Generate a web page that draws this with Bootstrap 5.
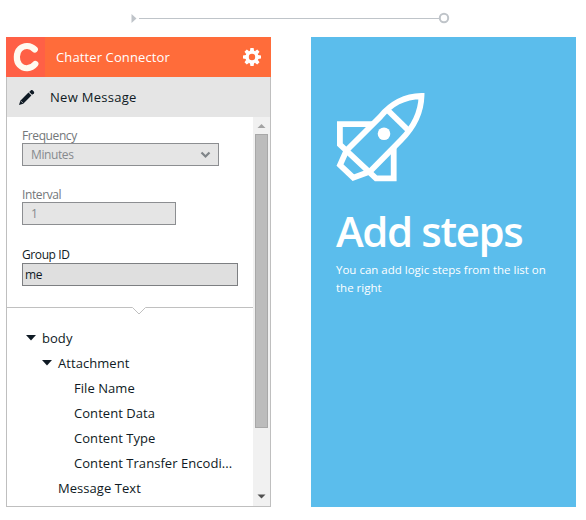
<!DOCTYPE html>
<html lang="en">
<head>
<meta charset="utf-8">
<meta name="viewport" content="width=device-width, initial-scale=1">
<title>Logic steps</title>
<link href="https://cdn.jsdelivr.net/npm/bootstrap@5.3.0/dist/css/bootstrap.min.css" rel="stylesheet">
<style>
  body { font-family: "Open Sans", "Noto Sans", sans-serif; font-size: 13px; line-height: 20px; color: #0f1a24; background: #fff; }
  svg { display: block; flex: none; }
  .designer { width: 586px; height: 520px; padding: 0 10px 13px 6px; }
  .track { height: 37px; padding-left: 125px; }
  .boards { gap: 40px; }
  .connector { width: 265px; height: 470px; border: 1px solid #bfbfbf; border-top: 0; }
  .connector-head { height: 40px; margin: 0 -1px; background: #ff6c3a; color: #fff; font-weight: 500; }
  .connector-head span { margin-left: 11px; letter-spacing: .12px; }
  .connector-head .gear { margin-right: 9px; }
  .brand-tile { width: 39px; height: 40px; background: #ff6046; }
  .operation { height: 40px; background: #e5e5e5; padding-left: 11px; }
  .operation span { margin-left: 15px; letter-spacing: .28px; }
  .fields { height: 190px; padding: 9px 0 0 15px; font-size: 12px; line-height: 17px; letter-spacing: -.4px; }
  .field-label { height: 17px; line-height: 20px; }
  .label-interval { margin-top: 19px; }
  .label-group { margin-top: 20px; margin-bottom: 1px; }
  .field-box { height: 23px; border: 1px solid #8c8e91; background: #e5e5e5; color: #868a8e; }
  .inactive { color: #73777a; }
  .entry { background: #dfdfdf; border-color: #7d7f82; color: #0f1a24; }
  .w-frequency { width: 197px; padding: 0 7px 0 8px; }
  .w-interval { width: 154px; padding-left: 8px; }
  .w-group { width: 216px; padding-left: 2px; }
  .tree { padding: 9px 0 0 19px; letter-spacing: .05px; }
  .tree-row { height: 25px; gap: 6px; }
  .level-1 { padding-left: 16px; }
  .level-1-leaf { padding-left: 32px; }
  .level-2 { padding-left: 48px; }
  .scroll-rail { width: 17px; background: #f1f1f1; }
  .scroll-thumb { width: 13px; height: 294px; margin-left: 2px; background: #bcbcbc; border: 1px solid #a8a8a8; }
  .steps { width: 265px; height: 470px; background: #5bbdec; color: #fff; padding: 55px 0 0 25px; }
  .steps h1 { font-size: 42px; line-height: 50px; font-weight: 600; letter-spacing: -1.4px; margin: 24px 0 0; }
  .steps p { font-size: 11.5px; line-height: 18px; font-weight: 500; margin: 5px 0 0; }
</style>
<script src="https://cdn.jsdelivr.net/npm/bootstrap@5.3.0/dist/js/bootstrap.bundle.min.js"></script>
</head>
<body>
<main class="designer overflow-hidden">
  <div class="track">
    <svg width="320" height="37" viewBox="0 0 320 37" fill="none" aria-hidden="true">
      <path d="M.5 14v9l5-4.500z" fill="#bfc4c9"/>
      <path d="M8 18.500h301" stroke="#bfc4c9"/>
      <circle cx="313" cy="18" r="4.200" stroke="#bfc4c9" stroke-width="2"/>
    </svg>
  </div>
  <div class="boards d-flex">
    <section class="connector d-flex flex-column">
      <header class="connector-head d-flex align-items-center flex-shrink-0">
        <div class="brand-tile d-flex">
          <svg width="39" height="40" viewBox="0 0 39 40" fill="none"><path d="M28.800 12.500C24.500 8 18 8 14 11.700C10 15.500 9.800 24 13.500 28C18 32.700 25 32.200 29.300 27" stroke="#fffaf0" stroke-width="6.200" stroke-linecap="round"/></svg>
        </div>
        <span>Chatter Connector</span>
        <svg class="gear ms-auto" width="20" height="20" viewBox="-10 -10 20 20">
          <g fill="#fff"><path fill-rule="evenodd" d="M0-6.600A6.600 6.600 0 1 1 0 6.600A6.600 6.600 0 1 1 0-6.600M0-3.200A3.200 3.200 0 1 0 0 3.200A3.200 3.200 0 1 0 0-3.200"/>
          <path id="tooth" d="M-2.100-6L-1.600-9h3.200L2.100-6z"/><use href="#tooth" transform="rotate(45)"/><use href="#tooth" transform="rotate(90)"/><use href="#tooth" transform="rotate(135)"/><use href="#tooth" transform="rotate(180)"/><use href="#tooth" transform="rotate(225)"/><use href="#tooth" transform="rotate(270)"/><use href="#tooth" transform="rotate(315)"/></g>
        </svg>
      </header>
      <div class="operation d-flex align-items-center flex-shrink-0">
        <svg width="17" height="17" viewBox="0 0 17 17" fill="#0f1a24"><path d="M1 16L2.300 11.800L10.500 3.600L13.400 6.500L5.200 14.700z"/><path d="M11.200 2.900L13 1.200C14 .300 17 3 16 4.300L14.100 5.800z"/><path d="M3.200 12.300L4.700 13.800" stroke="#e5e5e5" stroke-width=".8"/></svg>
        <span>New Message</span>
      </div>
      <div class="d-flex flex-grow-1 overflow-hidden">
        <div class="flex-grow-1 overflow-hidden">
          <div class="fields">
            <div class="field-label inactive">Frequency</div>
            <div class="field-box w-frequency d-flex align-items-center justify-content-between"><span>Minutes</span>
              <svg width="11" height="8" viewBox="0 0 11 8" fill="none"><path d="M1.500 1.500L5.500 5.500L9.500 1.500" stroke="#7f8488" stroke-width="2.200"/></svg></div>
            <div class="field-label label-interval inactive">Interval</div>
            <div class="field-box w-interval d-flex align-items-center">1</div>
            <div class="field-label label-group">Group ID</div>
            <div class="field-box entry w-group d-flex align-items-center">me</div>
          </div>
          <svg width="246" height="9" viewBox="0 0 246 9" fill="none"><path d="M0 .5H125.500L132 7L138.500.5H246" stroke="#c0c0c0"/></svg>
          <div class="tree">
            <div class="tree-row d-flex align-items-center"><svg width="10" height="6" viewBox="0 0 10 6"><path d="M0 0h10L5 5.500z" fill="#0f1a24"/></svg><span>body</span></div>
            <div class="tree-row level-1 d-flex align-items-center"><svg width="10" height="6" viewBox="0 0 10 6"><path d="M0 0h10L5 5.500z" fill="#0f1a24"/></svg><span>Attachment</span></div>
            <div class="tree-row level-2 d-flex align-items-center">File Name</div>
            <div class="tree-row level-2 d-flex align-items-center">Content Data</div>
            <div class="tree-row level-2 d-flex align-items-center">Content Type</div>
            <div class="tree-row level-2 d-flex align-items-center">Content Transfer Encodi...</div>
            <div class="tree-row level-1-leaf d-flex align-items-center">Message Text</div>
          </div>
        </div>
        <div class="scroll-rail d-flex flex-column flex-shrink-0">
          <svg width="17" height="17" viewBox="0 0 17 17"><path d="M4.500 11h8L8.500 7z" fill="#a3a3a3"/></svg>
          <div class="scroll-thumb"></div>
          <svg class="mt-auto" width="17" height="17" viewBox="0 0 17 17"><path d="M4.500 5.500h8l-4 4z" fill="#505050"/></svg>
        </div>
      </div>
    </section>
    <section class="steps">
      <svg width="90" height="90" viewBox="0 0 90 90" fill="none" stroke="#fff" stroke-width="5.800">
        <path d="M10.700 58.300L44.500 24.500C55 12 67 4.500 85.500 4C85 21.500 77.500 35.500 65 48L33.500 80"/>
        <path d="M51.500 18L73 39"/>
        <path d="M36 32.200H3.900V52.500L40 86.300H57.700V56"/>
        <path d="M10.500 58.500L4 73L17.300 85.700L34 79.500"/>
        <circle cx="48" cy="41.700" r="6.300" fill="#fff" stroke="none"/>
      </svg>
      <h1>Add steps</h1>
      <p>You can add logic steps from the list on<br>the right</p>
    </section>
  </div>
</main>
</body>
</html>
